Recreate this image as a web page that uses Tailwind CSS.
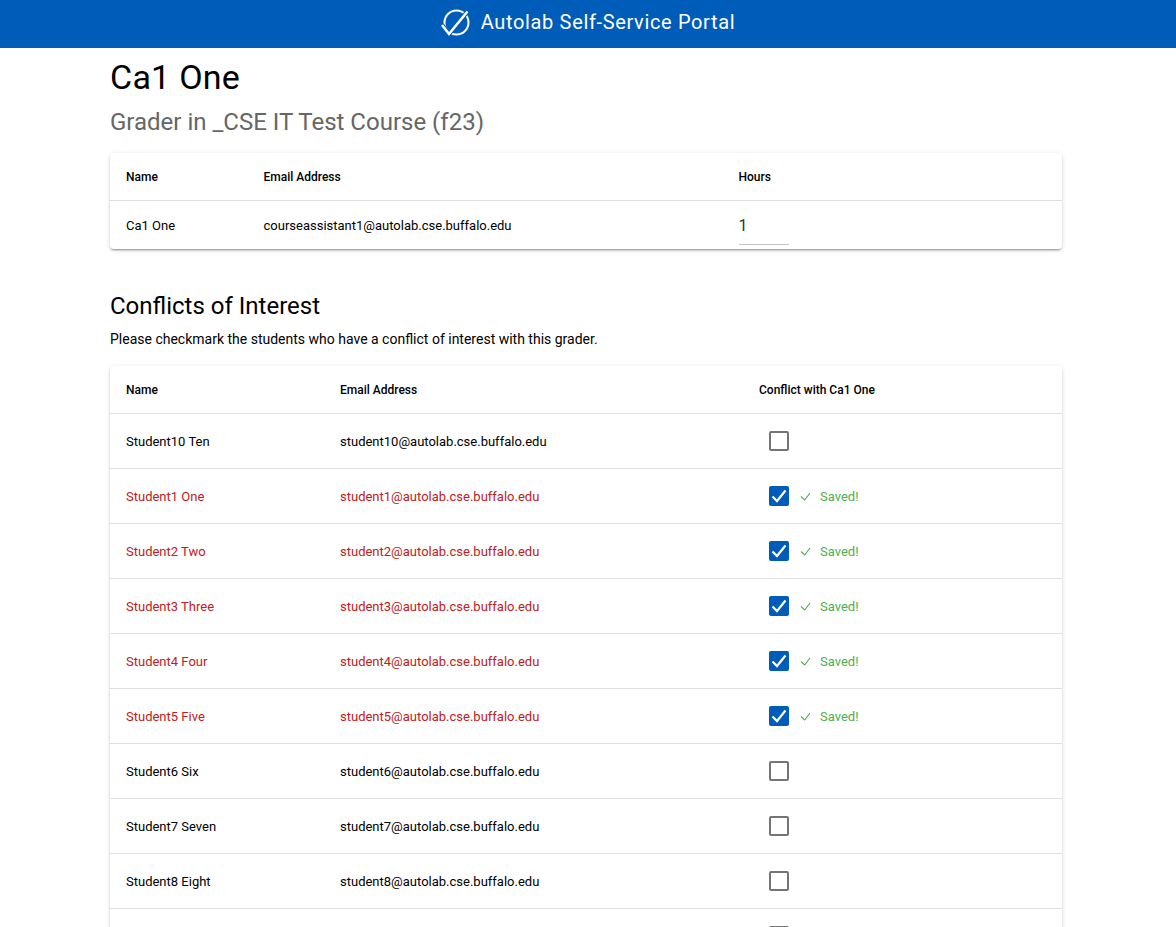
<!DOCTYPE html>
<html lang="en">
<head>
    <meta charset="UTF-8">
    <title>Autolab Self-Service Portal</title>
    <script src="https://cdn.jsdelivr.net/npm/@tailwindcss/browser@4"></script>
</head>
<body class="h-[927px] overflow-hidden bg-white text-black font-['Roboto',sans-serif]">
    <header class="h-12 pb-1 bg-[#005cb9] flex items-center justify-center gap-[11px] text-white">
        <svg class="w-[29px] h-[29px]" viewBox="0 0 29 29" fill="none" stroke="white">
            <circle cx="15.5" cy="14.5" r="12" stroke-width="2"/>
            <path d="M1 17L8 26L26.5 3.5" stroke="#005cb9" stroke-width="4.5"/>
            <path d="M1 17L8 26L26.5 3.5" stroke-width="2.6"/>
        </svg>
        <span class="text-[20px] tracking-[0.65px]">Autolab Self-Service Portal</span>
    </header>

    <main class="w-[952px] ml-[110px]">
        <h1 class="text-[34px] leading-[42px] tracking-[0.25px] mt-2">Ca1 One</h1>
        <h2 class="text-[24px] leading-[32px] mt-2 text-[#666666]">Grader in _CSE IT Test Course (f23)</h2>

        <section class="mt-[15px] rounded shadow-[0_3px_1px_-2px_rgba(0,0,0,0.2),0_2px_2px_0_rgba(0,0,0,0.14),0_1px_5px_0_rgba(0,0,0,0.12)] text-[13px]">
            <div class="grid grid-cols-[137.5px_475px_1fr] h-12 items-center pl-4 border-b border-[#e0e0e0] font-medium text-[12px]">
                <span>Name</span>
                <span>Email Address</span>
                <span>Hours</span>
            </div>
            <div class="grid grid-cols-[137.5px_475px_1fr] h-12 items-center pl-4">
                <span class="pt-[2px]">Ca1 One</span>
                <span class="pt-[2px]">courseassistant1@autolab.cse.buffalo.edu</span>
                <div class="w-[50px] h-10 border-b border-[#c4c4c4] text-[16px] leading-[42px] text-[#333333]">1</div>
            </div>
        </section>

        <h2 class="text-[24px] leading-[32px] mt-[41px]">Conflicts of Interest</h2>
        <p class="text-[14px] leading-5 mt-[7px]">Please checkmark the students who have a conflict of interest with this grader.</p>

        <section class="mt-[17px] rounded shadow-[0_3px_1px_-2px_rgba(0,0,0,0.2),0_2px_2px_0_rgba(0,0,0,0.14),0_1px_5px_0_rgba(0,0,0,0.12)] text-[13px]">
            <div class="grid grid-cols-[214px_419px_1fr] h-12 items-center px-4 border-b border-[#e0e0e0] font-medium text-[12px]">
                <span>Name</span>
                <span>Email Address</span>
                <span>Conflict with Ca1 One</span>
            </div>

            <div class="grid grid-cols-[214px_429px_1fr] h-[55px] items-center px-4 border-b border-[#e0e0e0]">
                <span class="pt-[2px]">Student10 Ten</span>
                <span class="pt-[2px]">student10@autolab.cse.buffalo.edu</span>
                <span class="w-5 h-5 rounded-[2px] border-2 border-[#757575]"></span>
            </div>

            <div class="grid grid-cols-[214px_429px_1fr] h-[55px] items-center px-4 border-b border-[#e0e0e0] text-[#bf2020]">
                <span class="pt-[2px]">Student1 One</span>
                <span class="pt-[2px]">student1@autolab.cse.buffalo.edu</span>
                <div class="flex items-center">
                    <svg class="w-5 h-5 rounded-[2px] bg-[#005cb9]" viewBox="0 0 20 20" fill="none" stroke="white" stroke-width="2.2"><path d="M3.5 10.5L8 15L16.5 4.5"/></svg>
                    <svg class="w-3 h-3 ml-[11px]" viewBox="0 0 12 12" fill="none" stroke="#4caf50" stroke-width="1.1"><path d="M1 6.5L4.7 10L10 3"/></svg>
                    <span class="ml-2 pt-[1px] text-[#4caf50]">Saved!</span>
                </div>
            </div>

            <div class="grid grid-cols-[214px_429px_1fr] h-[55px] items-center px-4 border-b border-[#e0e0e0] text-[#bf2020]">
                <span class="pt-[2px]">Student2 Two</span>
                <span class="pt-[2px]">student2@autolab.cse.buffalo.edu</span>
                <div class="flex items-center">
                    <svg class="w-5 h-5 rounded-[2px] bg-[#005cb9]" viewBox="0 0 20 20" fill="none" stroke="white" stroke-width="2.2"><path d="M3.5 10.5L8 15L16.5 4.5"/></svg>
                    <svg class="w-3 h-3 ml-[11px]" viewBox="0 0 12 12" fill="none" stroke="#4caf50" stroke-width="1.1"><path d="M1 6.5L4.7 10L10 3"/></svg>
                    <span class="ml-2 pt-[1px] text-[#4caf50]">Saved!</span>
                </div>
            </div>

            <div class="grid grid-cols-[214px_429px_1fr] h-[55px] items-center px-4 border-b border-[#e0e0e0] text-[#bf2020]">
                <span class="pt-[2px]">Student3 Three</span>
                <span class="pt-[2px]">student3@autolab.cse.buffalo.edu</span>
                <div class="flex items-center">
                    <svg class="w-5 h-5 rounded-[2px] bg-[#005cb9]" viewBox="0 0 20 20" fill="none" stroke="white" stroke-width="2.2"><path d="M3.5 10.5L8 15L16.5 4.5"/></svg>
                    <svg class="w-3 h-3 ml-[11px]" viewBox="0 0 12 12" fill="none" stroke="#4caf50" stroke-width="1.1"><path d="M1 6.5L4.7 10L10 3"/></svg>
                    <span class="ml-2 pt-[1px] text-[#4caf50]">Saved!</span>
                </div>
            </div>

            <div class="grid grid-cols-[214px_429px_1fr] h-[55px] items-center px-4 border-b border-[#e0e0e0] text-[#bf2020]">
                <span class="pt-[2px]">Student4 Four</span>
                <span class="pt-[2px]">student4@autolab.cse.buffalo.edu</span>
                <div class="flex items-center">
                    <svg class="w-5 h-5 rounded-[2px] bg-[#005cb9]" viewBox="0 0 20 20" fill="none" stroke="white" stroke-width="2.2"><path d="M3.5 10.5L8 15L16.5 4.5"/></svg>
                    <svg class="w-3 h-3 ml-[11px]" viewBox="0 0 12 12" fill="none" stroke="#4caf50" stroke-width="1.1"><path d="M1 6.5L4.7 10L10 3"/></svg>
                    <span class="ml-2 pt-[1px] text-[#4caf50]">Saved!</span>
                </div>
            </div>

            <div class="grid grid-cols-[214px_429px_1fr] h-[55px] items-center px-4 border-b border-[#e0e0e0] text-[#bf2020]">
                <span class="pt-[2px]">Student5 Five</span>
                <span class="pt-[2px]">student5@autolab.cse.buffalo.edu</span>
                <div class="flex items-center">
                    <svg class="w-5 h-5 rounded-[2px] bg-[#005cb9]" viewBox="0 0 20 20" fill="none" stroke="white" stroke-width="2.2"><path d="M3.5 10.5L8 15L16.5 4.5"/></svg>
                    <svg class="w-3 h-3 ml-[11px]" viewBox="0 0 12 12" fill="none" stroke="#4caf50" stroke-width="1.1"><path d="M1 6.5L4.7 10L10 3"/></svg>
                    <span class="ml-2 pt-[1px] text-[#4caf50]">Saved!</span>
                </div>
            </div>

            <div class="grid grid-cols-[214px_429px_1fr] h-[55px] items-center px-4 border-b border-[#e0e0e0]">
                <span class="pt-[2px]">Student6 Six</span>
                <span class="pt-[2px]">student6@autolab.cse.buffalo.edu</span>
                <span class="w-5 h-5 rounded-[2px] border-2 border-[#757575]"></span>
            </div>

            <div class="grid grid-cols-[214px_429px_1fr] h-[55px] items-center px-4 border-b border-[#e0e0e0]">
                <span class="pt-[2px]">Student7 Seven</span>
                <span class="pt-[2px]">student7@autolab.cse.buffalo.edu</span>
                <span class="w-5 h-5 rounded-[2px] border-2 border-[#757575]"></span>
            </div>

            <div class="grid grid-cols-[214px_429px_1fr] h-[55px] items-center px-4 border-b border-[#e0e0e0]">
                <span class="pt-[2px]">Student8 Eight</span>
                <span class="pt-[2px]">student8@autolab.cse.buffalo.edu</span>
                <span class="w-5 h-5 rounded-[2px] border-2 border-[#757575]"></span>
            </div>

            <div class="grid grid-cols-[214px_429px_1fr] h-[55px] items-center px-4 border-b border-[#e0e0e0]">
                <span class="pt-[2px]">Student9 Nine</span>
                <span class="pt-[2px]">student9@autolab.cse.buffalo.edu</span>
                <span class="w-5 h-5 rounded-[2px] border-2 border-[#757575]"></span>
            </div>
        </section>
    </main>
</body>
</html>
